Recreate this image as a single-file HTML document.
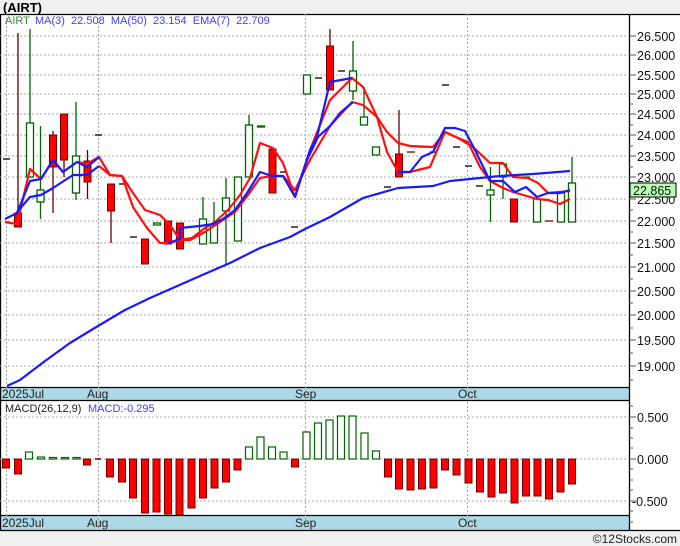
<!DOCTYPE html>
<html><head><meta charset="utf-8"><style>
html,body{margin:0;padding:0;background:#f0f0f0;}
svg{display:block;font-family:"Liberation Sans",sans-serif;}
</style></head><body>
<svg width="680" height="546" viewBox="0 0 680 546" xmlns="http://www.w3.org/2000/svg">
<rect x="0" y="0" width="680" height="546" fill="#f0f0f0"/>
<text x="3" y="12" font-size="13" font-weight="bold" fill="#000">(AIRT)</text>
<rect x="0" y="14" width="680" height="517" fill="#fff"/>
<rect x="0" y="388" width="629" height="12" fill="#add8e6"/>
<rect x="0" y="516" width="629" height="14" fill="#add8e6"/>
<g stroke="#000" stroke-width="1.3">
<line x1="0" y1="14.5" x2="680" y2="14.5"/>
<line x1="0" y1="387.5" x2="629" y2="387.5"/>
<line x1="0" y1="400.5" x2="629" y2="400.5"/>
<line x1="0" y1="515.5" x2="629" y2="515.5"/>
<line x1="0" y1="530.5" x2="680" y2="530.5"/>
<line x1="629.5" y1="14" x2="629.5" y2="531"/>
<line x1="0.5" y1="14" x2="0.5" y2="531"/>
</g>
<g stroke="#aaa" stroke-dasharray="2,2" stroke-width="1">
<line x1="0" y1="36" x2="629" y2="36"/><line x1="0" y1="55" x2="629" y2="55"/>
<line x1="0" y1="75" x2="629" y2="75"/><line x1="0" y1="94" x2="629" y2="94"/>
<line x1="0" y1="114" x2="629" y2="114"/><line x1="0" y1="135" x2="629" y2="135"/>
<line x1="0" y1="156" x2="629" y2="156"/><line x1="0" y1="177" x2="629" y2="177"/>
<line x1="0" y1="199" x2="629" y2="199"/><line x1="0" y1="221" x2="629" y2="221"/>
<line x1="0" y1="243" x2="629" y2="243"/><line x1="0" y1="267" x2="629" y2="267"/>
<line x1="0" y1="291" x2="629" y2="291"/><line x1="0" y1="315" x2="629" y2="315"/>
<line x1="0" y1="340" x2="629" y2="340"/><line x1="0" y1="366" x2="629" y2="366"/>
<line x1="0" y1="417" x2="629" y2="417"/><line x1="0" y1="459" x2="629" y2="459"/>
<line x1="0" y1="501" x2="629" y2="501"/>
<line x1="6.5" y1="14" x2="6.5" y2="530"/><line x1="98.5" y1="14" x2="98.5" y2="530"/>
<line x1="305.5" y1="14" x2="305.5" y2="530"/><line x1="467.5" y1="14" x2="467.5" y2="530"/>
</g>
<g stroke="#555" stroke-width="1">
<line x1="629" y1="36" x2="636" y2="36"/><line x1="629" y1="55" x2="636" y2="55"/><line x1="629" y1="75" x2="636" y2="75"/><line x1="629" y1="94" x2="636" y2="94"/><line x1="629" y1="114" x2="636" y2="114"/><line x1="629" y1="135" x2="636" y2="135"/><line x1="629" y1="156" x2="636" y2="156"/><line x1="629" y1="177" x2="636" y2="177"/><line x1="629" y1="199" x2="636" y2="199"/><line x1="629" y1="221" x2="636" y2="221"/><line x1="629" y1="243" x2="636" y2="243"/><line x1="629" y1="267" x2="636" y2="267"/><line x1="629" y1="291" x2="636" y2="291"/><line x1="629" y1="315" x2="636" y2="315"/><line x1="629" y1="340" x2="636" y2="340"/><line x1="629" y1="366" x2="636" y2="366"/>
<line x1="629" y1="104" x2="633" y2="104"/><line x1="629" y1="125" x2="633" y2="125"/><line x1="629" y1="146" x2="633" y2="146"/><line x1="629" y1="167" x2="633" y2="167"/><line x1="629" y1="210" x2="633" y2="210"/><line x1="629" y1="232" x2="633" y2="232"/><line x1="629" y1="255" x2="633" y2="255"/><line x1="629" y1="279" x2="633" y2="279"/><line x1="629" y1="303" x2="633" y2="303"/><line x1="629" y1="328" x2="633" y2="328"/><line x1="629" y1="353" x2="633" y2="353"/><line x1="629" y1="380" x2="633" y2="380"/>
<line x1="629" y1="417" x2="636" y2="417"/><line x1="629" y1="459" x2="636" y2="459"/><line x1="629" y1="501" x2="636" y2="501"/>
<line x1="629" y1="428" x2="633" y2="428"/><line x1="629" y1="438" x2="633" y2="438"/><line x1="629" y1="448" x2="633" y2="448"/><line x1="629" y1="469" x2="633" y2="469"/><line x1="629" y1="480" x2="633" y2="480"/><line x1="629" y1="490" x2="633" y2="490"/><line x1="629" y1="511" x2="633" y2="511"/><line x1="629" y1="522" x2="633" y2="522"/><line x1="629" y1="406" x2="633" y2="406"/>
</g>
<g font-size="12.5" fill="#111">
<text x="637" y="41">26.500</text><text x="637" y="60">26.000</text><text x="637" y="80">25.500</text><text x="637" y="99">25.000</text><text x="637" y="119">24.500</text><text x="637" y="140">24.000</text><text x="637" y="161">23.500</text><text x="637" y="182">23.000</text><text x="637" y="204">22.500</text><text x="637" y="226">22.000</text><text x="637" y="248">21.500</text><text x="637" y="272">21.000</text><text x="637" y="296">20.500</text><text x="637" y="320">20.000</text><text x="637" y="345">19.500</text><text x="637" y="371">19.000</text>
<text x="637" y="422">0.500</text><text x="637" y="464">0.000</text><text x="632" y="506">-0.500</text>
</g>
<rect x="630" y="183" width="46" height="14" fill="#b6ffb0" stroke="#000"/>
<text x="633" y="195" font-size="12.5" fill="#111">22.865</text>
<g font-size="12" fill="#222">
<text x="2" y="398">2025Jul</text><text x="87" y="398">Aug</text><text x="295" y="398">Sep</text><text x="458" y="398">Oct</text>
<text x="2" y="527">2025Jul</text><text x="87" y="527">Aug</text><text x="295" y="527">Sep</text><text x="458" y="527">Oct</text>
</g>
<text x="5" y="24" font-size="11" fill="#3a8a3a">AIRT</text>
<text x="35" y="24" font-size="11" fill="#4040ff" xml:space="preserve">MA(3)  22.508  MA(50)  23.154  EMA(7)  22.709</text>
<text x="5" y="412" font-size="11" fill="#222">MACD(26,12,9)</text>
<text x="88" y="412" font-size="11" fill="#4040ff">MACD:-0.295</text>
<g stroke-width="1.3">
<g stroke="#600000">
<line x1="18" y1="33" x2="18" y2="221"/><line x1="53" y1="131" x2="53" y2="213"/><line x1="64" y1="114" x2="64" y2="177"/><line x1="87.5" y1="150" x2="87.5" y2="199"/><line x1="111" y1="184" x2="111" y2="243"/><line x1="330" y1="29" x2="330" y2="90"/><line x1="399" y1="110" x2="399" y2="177"/>
</g>
<g stroke="#006400">
<line x1="30" y1="29" x2="30" y2="177"/><line x1="40.5" y1="126" x2="40.5" y2="219"/><line x1="76" y1="102" x2="76" y2="200"/><line x1="203" y1="197" x2="203" y2="244"/><line x1="214" y1="202" x2="214" y2="243"/><line x1="226" y1="178" x2="226" y2="265"/><line x1="249" y1="115" x2="249" y2="177"/><line x1="353" y1="41" x2="353" y2="100"/><line x1="364" y1="87" x2="364" y2="125"/><line x1="490.5" y1="167" x2="490.5" y2="222"/><line x1="503" y1="164" x2="503" y2="199"/><line x1="572" y1="157" x2="572" y2="222"/>
</g>
</g>
<g fill="#ff0000" stroke="#700000" stroke-width="1">
<rect x="14.5" y="213" width="7" height="14"/><rect x="49.5" y="135" width="7" height="32"/><rect x="60.5" y="114" width="7" height="46"/><rect x="84" y="161" width="7" height="21"/><rect x="107.5" y="184" width="7" height="27"/><rect x="141.5" y="239" width="7" height="25"/><rect x="164.5" y="221" width="7" height="23"/><rect x="176.5" y="223" width="7" height="26"/><rect x="269" y="149" width="7" height="44"/><rect x="326.5" y="46" width="7" height="44"/><rect x="395.5" y="154" width="7" height="23"/><rect x="510.5" y="199" width="7" height="23"/>
</g>
<g fill="#fff" stroke="#006400" stroke-width="1.3">
<rect x="26.5" y="123" width="7" height="54"/><rect x="37" y="190" width="7" height="12"/><rect x="72.5" y="156" width="7" height="37"/><rect x="153.5" y="223" width="7" height="2"/><rect x="199.5" y="219" width="7" height="25"/><rect x="210.5" y="225" width="7" height="18"/><rect x="222.5" y="198" width="7" height="13"/><rect x="234.5" y="177" width="7" height="64"/><rect x="245.5" y="125" width="7" height="52"/><rect x="257.5" y="126" width="7" height="1"/><rect x="303.5" y="75" width="7" height="19"/><rect x="349.5" y="71" width="7" height="20"/><rect x="360.5" y="117" width="7" height="8"/><rect x="372.5" y="147" width="7" height="8"/><rect x="487" y="190" width="7" height="5"/><rect x="499.5" y="164" width="7" height="13"/><rect x="533.5" y="199" width="7" height="23"/><rect x="557.5" y="193" width="7" height="29"/><rect x="568.5" y="183" width="7" height="39"/>
</g>
<g stroke="#000" stroke-width="1.3">
<line x1="3" y1="159" x2="10" y2="159"/><line x1="95" y1="135" x2="102" y2="135"/><line x1="119" y1="184" x2="125" y2="184"/><line x1="130" y1="237" x2="137" y2="237"/><line x1="280" y1="172" x2="286" y2="172"/><line x1="291" y1="227" x2="298" y2="227"/><line x1="315" y1="78" x2="322" y2="78"/><line x1="338" y1="71" x2="345" y2="71"/><line x1="384" y1="187" x2="391" y2="187"/><line x1="418" y1="147" x2="427" y2="147"/><line x1="430" y1="152" x2="437" y2="152"/><line x1="442" y1="85" x2="449" y2="85"/><line x1="453" y1="147" x2="460" y2="147"/><line x1="465" y1="166" x2="472" y2="166"/><line x1="476" y1="186" x2="483" y2="186"/>
<line x1="407" y1="152" x2="415" y2="152" stroke="#700000"/><line x1="545" y1="221" x2="553" y2="221" stroke="#700000"/><line x1="523" y1="177" x2="530" y2="177" stroke="#006400"/>
</g>
<g fill="none" stroke-width="2.2" stroke-linejoin="round">
<polyline stroke="#ff1010" points="5,222 17,224 30,169 41,179 53,160 63,172 77,162 87,164 99,157 110,175 122,176 133,193 145,210 160,215 170,225 180,240 192,238 205,228 215,222 228,210 240,195 250,178 260,143 273,148 283,163 295,197 310,150 330,100 352,78 363,87 377,117 387,152 398,172 410,172 430,167 445,132 458,138 473,147 490,163 503,163 513,177 528,178 538,183 548,193 570,191"/>
<polyline stroke="#ff1010" points="99,166 110,175 122,176 133,207 147,228 160,243 170,243 180,240 190,240 205,232 220,222 235,212 248,195 260,178 272,176 283,176 295,190 310,160 330,126 352,102 363,105 377,117 387,132 398,143 410,146 433,147 445,132 458,138 468,142 480,167 490,181 503,188 513,192 537,199 548,200 560,204 570,199"/>
<polyline stroke="#1a1aff" points="5,219 17,213 30,181 41,179 53,160 63,172 77,162 87,167 99,157"/>
<polyline stroke="#1a1aff" points="17,212 30,197 41,195 53,188 73,175 87,175 99,166"/>
<polyline stroke="#1a1aff" points="168,243 180,239 180,228 200,226 213,224 223,219 235,210 247,193 260,172 272,176 283,176 295,197 310,150 317,137 330,82 352,78"/>
<polyline stroke="#1a1aff" points="300,180 307,160 318,137 330,126 340,113 353,102"/>
<polyline stroke="#1a1aff" points="398,172 410,172 422,157 433,152 445,128 455,128 465,131 475,150 490,181 503,181 515,192 526,187 537,197 548,193 560,193 570,190"/>
<polyline stroke="#1a1aff" points="7,386 20,380 45,361 70,343 98,326 125,310 150,298 175,287 200,276 230,263 260,248 290,237 305,229 330,217 363,198 398,188 433,186 450,181 500,176 533,174 570,171"/>
</g>
<g fill="#ff0000" stroke="#700000" stroke-width="1">
<rect x="2.5" y="459" width="7" height="9"/><rect x="14.5" y="459" width="7" height="15"/><rect x="83.5" y="459" width="7" height="6"/><rect x="106.5" y="459" width="7" height="18"/><rect x="118.5" y="459" width="7" height="23"/><rect x="129.5" y="459" width="7" height="39"/><rect x="141.5" y="459" width="7" height="54"/><rect x="153" y="459" width="7" height="53"/><rect x="164.5" y="459" width="7" height="55"/><rect x="176" y="459" width="7" height="56"/><rect x="188" y="459" width="7" height="49"/><rect x="199.5" y="459" width="7" height="39"/><rect x="211" y="459" width="7" height="29"/><rect x="222.5" y="459" width="7" height="23"/><rect x="234" y="459" width="7" height="11"/><rect x="291.5" y="459" width="7" height="8"/><rect x="384.5" y="459" width="7" height="18"/><rect x="395.5" y="459" width="7" height="30"/><rect x="407" y="459" width="7" height="31"/><rect x="418.5" y="459" width="7" height="30"/><rect x="430" y="459" width="7" height="29"/><rect x="441.5" y="459" width="7" height="11"/><rect x="453" y="459" width="7" height="16"/><rect x="465" y="459" width="7" height="24"/><rect x="476.5" y="459" width="7" height="33"/><rect x="488" y="459" width="7" height="38"/><rect x="499.5" y="459" width="7" height="34"/><rect x="511" y="459" width="7" height="44"/><rect x="522.5" y="459" width="7" height="37"/><rect x="534" y="459" width="7" height="37"/><rect x="545.5" y="459" width="7" height="40"/><rect x="557" y="459" width="7" height="33"/><rect x="568.5" y="459" width="7" height="25"/>
</g>
<g fill="#fff" stroke="#006400" stroke-width="1.2">
<rect x="25.5" y="452" width="7" height="7"/><rect x="37.5" y="457" width="7" height="2"/><rect x="49.5" y="457.5" width="7" height="1.5"/><rect x="61.5" y="457.5" width="7" height="1.5"/><rect x="73" y="457.5" width="7" height="1.5"/><rect x="245.5" y="447" width="7" height="12"/><rect x="257" y="437" width="7" height="22"/><rect x="268.5" y="447" width="7" height="12"/><rect x="280" y="452" width="7" height="7"/><rect x="303" y="432" width="7" height="27"/><rect x="314.5" y="423" width="7" height="36"/><rect x="326" y="420" width="7" height="39"/><rect x="337.5" y="416" width="7" height="43"/><rect x="349" y="416" width="7" height="43"/><rect x="361" y="433" width="7" height="26"/><rect x="372.5" y="451" width="7" height="8"/>
</g>
<line x1="95" y1="459" x2="101" y2="459" stroke="#700000" stroke-width="1.5"/>
<text x="677" y="543" font-size="12" fill="#222" text-anchor="end">©12Stocks.com</text>
</svg>
</body></html>
